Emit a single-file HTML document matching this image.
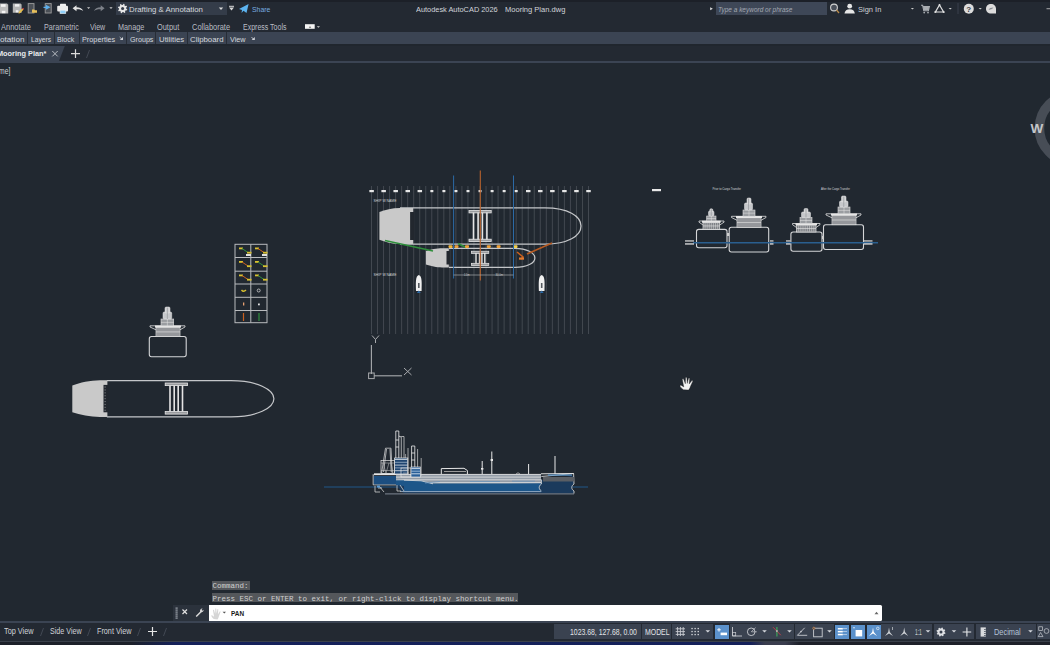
<!DOCTYPE html>
<html><head><meta charset="utf-8">
<style>
*{margin:0;padding:0;box-sizing:border-box}
html,body{width:1050px;height:645px;overflow:hidden;background:#212830;font-family:"Liberation Sans",sans-serif}
.a{position:absolute;white-space:pre;transform-origin:0 0;line-height:normal}
.sep{top:32px;width:1px;height:12px;background:#272d36}
.sb{height:15.4px;background:#3a4250}
.bl{height:14.2px;background:#5b91cb}
</style></head><body>
<div class="a" style="left:0;top:0;width:1050px;height:32px;background:#232932"></div>
<div class="a" style="left:0;top:0;width:1050px;height:1.5px;background:#1c2028"></div>
<div class="a" style="left:0;top:32px;width:1050px;height:12px;background:#3b4453"></div>
<div class="a" style="left:0;top:44px;width:1050px;height:2px;background:#20262e"></div>
<div class="a" style="left:0;top:46px;width:1050px;height:15px;background:#232932"></div>
<div class="a" style="left:0;top:61px;width:1050px;height:2px;background:#3b4453"></div>
<div class="a" style="left:0;top:621px;width:1050px;height:2px;background:#3b4453"></div>
<div class="a" style="left:0;top:623px;width:1050px;height:18px;background:#232932"></div>
<div class="a" style="left:0;top:641px;width:1050px;height:1px;background:#3a404a"></div>
<div class="a" style="left:0;top:642px;width:1050px;height:3px;background:linear-gradient(90deg,#1c2029 0px,#1c2029 130px,#15215a 175px,#14205a 750px,#3a3d4e 765px,#3a3d4e 785px,#1d2029 800px,#1d2029 1050px)"></div>
<!-- title bar boxes -->
<div class="a" style="left:116px;top:2px;width:110.5px;height:13px;background:#343c49"></div>
<div class="a" style="left:716px;top:2.4px;width:111px;height:12.8px;background:#3e4757"></div>
<!-- panel separators -->
<div class="a sep" style="left:27.4px"></div><div class="a sep" style="left:54.3px"></div><div class="a sep" style="left:78.9px"></div><div class="a sep" style="left:126.3px"></div><div class="a sep" style="left:154.9px"></div><div class="a sep" style="left:187.4px"></div><div class="a sep" style="left:226.4px"></div>
<svg class="a" style="left:0;top:46px" width="70" height="15"><polygon points="0,0 64.8,0 59,15 0,15" fill="#3b4453"/></svg>
<!-- command line -->
<div class="a" style="left:212px;top:580.5px;width:37.7px;height:9.4px;background:#54575b"></div>
<div class="a" style="left:212px;top:593px;width:306px;height:9.4px;background:#54575b"></div>
<div class="a" style="left:173px;top:604.5px;width:36px;height:16.2px;background:#2b323c"></div>
<div class="a" style="left:209px;top:605px;width:673px;height:15.8px;background:#ffffff;border-radius:0 1.5px 1.5px 0"></div>
<div class="a sb" style="left:554px;top:623.7px;width:86.6px"></div>
<div class="a sb" style="left:642px;top:623.7px;width:29.4px"></div>
<div class="a sb" style="left:672.3px;top:623.7px;width:40.7px"></div>
<div class="a sb" style="left:729.6px;top:623.7px;width:64.4px"></div>
<div class="a sb" style="left:795px;top:623.7px;width:39.0px"></div>
<div class="a sb" style="left:881.3px;top:623.7px;width:51.0px"></div>
<div class="a sb" style="left:933.9px;top:623.7px;width:25.7px"></div>
<div class="a sb" style="left:960.2px;top:623.7px;width:13.6px"></div>
<div class="a sb" style="left:975.7px;top:623.7px;width:60.0px"></div>
<div class="a sb" style="left:1037.3px;top:623.7px;width:14.7px"></div>
<div class="a bl" style="left:714.8px;top:624.6px;width:14.1px"></div>
<div class="a bl" style="left:835.2px;top:624.6px;width:14.2px"></div>
<div class="a bl" style="left:851px;top:624.6px;width:14.0px"></div>
<div class="a bl" style="left:867.2px;top:624.6px;width:14.1px"></div>
<div class="a" style="left:128.90px;top:5.12px;font-size:7.7px;color:#d6d9de;font-weight:normal;font-style:normal;transform:scaleX(1.018)">Drafting &amp; Annotation</div>
<div class="a" style="left:252.00px;top:5.12px;font-size:7.8px;color:#78aee0;font-weight:normal;font-style:normal;transform:scaleX(0.879)">Share</div>
<div class="a" style="left:415.60px;top:5.12px;font-size:7.8px;color:#d2d5da;font-weight:normal;font-style:normal;transform:scaleX(0.947)">Autodesk AutoCAD 2026</div>
<div class="a" style="left:505.00px;top:5.12px;font-size:7.8px;color:#d2d5da;font-weight:normal;font-style:normal;transform:scaleX(0.967)">Mooring Plan.dwg</div>
<div class="a" style="left:718.00px;top:5.12px;font-size:7.8px;color:#a3a9b2;font-weight:normal;font-style:italic;transform:scaleX(0.831)">Type a keyword or phrase</div>
<div class="a" style="left:858.00px;top:5.32px;font-size:7.8px;color:#cdd1d6;font-weight:normal;font-style:normal;transform:scaleX(0.961)">Sign In</div>
<div class="a" style="left:0.90px;top:21.77px;font-size:8.4px;color:#b9bdc4;font-weight:normal;font-style:normal;transform:scaleX(0.892)">Annotate</div>
<div class="a" style="left:44.00px;top:21.77px;font-size:8.4px;color:#b9bdc4;font-weight:normal;font-style:normal;transform:scaleX(0.859)">Parametric</div>
<div class="a" style="left:90.30px;top:21.77px;font-size:8.4px;color:#b9bdc4;font-weight:normal;font-style:normal;transform:scaleX(0.844)">View</div>
<div class="a" style="left:118.30px;top:21.77px;font-size:8.4px;color:#b9bdc4;font-weight:normal;font-style:normal;transform:scaleX(0.869)">Manage</div>
<div class="a" style="left:156.90px;top:21.77px;font-size:8.4px;color:#b9bdc4;font-weight:normal;font-style:normal;transform:scaleX(0.883)">Output</div>
<div class="a" style="left:191.90px;top:21.77px;font-size:8.4px;color:#b9bdc4;font-weight:normal;font-style:normal;transform:scaleX(0.889)">Collaborate</div>
<div class="a" style="left:242.60px;top:21.77px;font-size:8.4px;color:#b9bdc4;font-weight:normal;font-style:normal;transform:scaleX(0.836)">Express Tools</div>
<div class="a" style="left:0.00px;top:34.95px;font-size:8.1px;color:#d5d8dd;font-weight:normal;font-style:normal;transform:scaleX(1.008)">otation</div>
<div class="a" style="left:31.00px;top:34.95px;font-size:8.1px;color:#d5d8dd;font-weight:normal;font-style:normal;transform:scaleX(0.825)">Layers</div>
<div class="a" style="left:57.10px;top:34.95px;font-size:8.1px;color:#d5d8dd;font-weight:normal;font-style:normal;transform:scaleX(0.873)">Block</div>
<div class="a" style="left:81.70px;top:34.95px;font-size:8.1px;color:#d5d8dd;font-weight:normal;font-style:normal;transform:scaleX(0.901)">Properties</div>
<div class="a" style="left:129.70px;top:34.95px;font-size:8.1px;color:#d5d8dd;font-weight:normal;font-style:normal;transform:scaleX(0.883)">Groups</div>
<div class="a" style="left:158.90px;top:34.95px;font-size:8.1px;color:#d5d8dd;font-weight:normal;font-style:normal;transform:scaleX(0.964)">Utilities</div>
<div class="a" style="left:190.00px;top:34.95px;font-size:8.1px;color:#d5d8dd;font-weight:normal;font-style:normal;transform:scaleX(0.969)">Clipboard</div>
<div class="a" style="left:230.00px;top:34.95px;font-size:8.1px;color:#d5d8dd;font-weight:normal;font-style:normal;transform:scaleX(0.895)">View</div>
<div class="a" style="left:-3.20px;top:49.04px;font-size:8px;color:#e8eaed;font-weight:bold;font-style:normal;transform:scaleX(0.918)">Mooring Plan*</div>
<div class="a" style="left:-1.00px;top:65.98px;font-size:8.5px;color:#d0d3d8;font-weight:normal;font-style:normal;transform:scaleX(0.797)">me]</div>
<div class="a" style="left:4.00px;top:626.27px;font-size:8.4px;color:#d0d3d8;font-weight:normal;font-style:normal;transform:scaleX(0.874)">Top View</div>
<div class="a" style="left:49.60px;top:626.27px;font-size:8.4px;color:#d0d3d8;font-weight:normal;font-style:normal;transform:scaleX(0.852)">Side View</div>
<div class="a" style="left:96.70px;top:626.27px;font-size:8.4px;color:#d0d3d8;font-weight:normal;font-style:normal;transform:scaleX(0.865)">Front View</div>
<div class="a" style="left:570.30px;top:627.46px;font-size:8.3px;color:#e2e4e7;font-weight:normal;font-style:normal;transform:scaleX(0.828)">1023.68, 127.68, 0.00</div>
<div class="a" style="left:644.60px;top:627.46px;font-size:8.3px;color:#e2e4e7;font-weight:normal;font-style:normal;transform:scaleX(0.833)">MODEL</div>
<div class="a" style="left:994.00px;top:627.46px;font-size:8.3px;color:#b4c2d6;font-weight:normal;font-style:normal;transform:scaleX(0.893)">Decimal</div>
<div class="a" style="left:915.00px;top:627.46px;font-size:8.3px;color:#c8ccd2;font-weight:normal;font-style:normal;transform:scaleX(0.587)">1:1</div>
<div class="a" style="left:231.30px;top:609.86px;font-size:7px;color:#1a1a1a;font-weight:bold;font-style:normal;transform:scaleX(0.915)">PAN</div>
<div class="a" style="left:212.5px;top:581.6px;font-family:'Liberation Mono',monospace;font-size:7.5px;color:#d0d0d0">Command:</div>
<div class="a" style="left:212.5px;top:594.6px;font-family:'Liberation Mono',monospace;font-size:7.5px;color:#d0d0d0">Press ESC or ENTER to exit, or right-click to display shortcut menu.</div>
<svg class="a" style="left:0;top:0" width="1050" height="645" viewBox="0 0 1050 645">
<line x1="371.5" y1="186" x2="371.5" y2="334" stroke="#464c54" stroke-width="0.9"/>
<line x1="377.53" y1="186" x2="377.53" y2="334" stroke="#464c54" stroke-width="0.9"/>
<line x1="383.56" y1="186" x2="383.56" y2="334" stroke="#464c54" stroke-width="0.9"/>
<line x1="389.58" y1="186" x2="389.58" y2="334" stroke="#464c54" stroke-width="0.9"/>
<line x1="395.61" y1="186" x2="395.61" y2="334" stroke="#464c54" stroke-width="0.9"/>
<line x1="401.64" y1="186" x2="401.64" y2="334" stroke="#464c54" stroke-width="0.9"/>
<line x1="407.67" y1="186" x2="407.67" y2="334" stroke="#464c54" stroke-width="0.9"/>
<line x1="413.7" y1="186" x2="413.7" y2="334" stroke="#464c54" stroke-width="0.9"/>
<line x1="419.72" y1="186" x2="419.72" y2="334" stroke="#464c54" stroke-width="0.9"/>
<line x1="425.75" y1="186" x2="425.75" y2="334" stroke="#464c54" stroke-width="0.9"/>
<line x1="431.78" y1="186" x2="431.78" y2="334" stroke="#464c54" stroke-width="0.9"/>
<line x1="437.81" y1="186" x2="437.81" y2="334" stroke="#464c54" stroke-width="0.9"/>
<line x1="443.84" y1="186" x2="443.84" y2="334" stroke="#464c54" stroke-width="0.9"/>
<line x1="449.86" y1="186" x2="449.86" y2="334" stroke="#464c54" stroke-width="0.9"/>
<line x1="455.89" y1="186" x2="455.89" y2="334" stroke="#464c54" stroke-width="0.9"/>
<line x1="461.92" y1="186" x2="461.92" y2="334" stroke="#464c54" stroke-width="0.9"/>
<line x1="467.95" y1="186" x2="467.95" y2="334" stroke="#464c54" stroke-width="0.9"/>
<line x1="473.98" y1="186" x2="473.98" y2="334" stroke="#464c54" stroke-width="0.9"/>
<line x1="480" y1="186" x2="480" y2="334" stroke="#464c54" stroke-width="0.9"/>
<line x1="486.03" y1="186" x2="486.03" y2="334" stroke="#464c54" stroke-width="0.9"/>
<line x1="492.06" y1="186" x2="492.06" y2="334" stroke="#464c54" stroke-width="0.9"/>
<line x1="498.09" y1="186" x2="498.09" y2="334" stroke="#464c54" stroke-width="0.9"/>
<line x1="504.12" y1="186" x2="504.12" y2="334" stroke="#464c54" stroke-width="0.9"/>
<line x1="510.14" y1="186" x2="510.14" y2="334" stroke="#464c54" stroke-width="0.9"/>
<line x1="516.17" y1="186" x2="516.17" y2="334" stroke="#464c54" stroke-width="0.9"/>
<line x1="522.2" y1="186" x2="522.2" y2="334" stroke="#464c54" stroke-width="0.9"/>
<line x1="528.23" y1="186" x2="528.23" y2="334" stroke="#464c54" stroke-width="0.9"/>
<line x1="534.26" y1="186" x2="534.26" y2="334" stroke="#464c54" stroke-width="0.9"/>
<line x1="540.28" y1="186" x2="540.28" y2="334" stroke="#464c54" stroke-width="0.9"/>
<line x1="546.31" y1="186" x2="546.31" y2="334" stroke="#464c54" stroke-width="0.9"/>
<line x1="552.34" y1="186" x2="552.34" y2="334" stroke="#464c54" stroke-width="0.9"/>
<line x1="558.37" y1="186" x2="558.37" y2="334" stroke="#464c54" stroke-width="0.9"/>
<line x1="564.4" y1="186" x2="564.4" y2="334" stroke="#464c54" stroke-width="0.9"/>
<line x1="570.42" y1="186" x2="570.42" y2="334" stroke="#464c54" stroke-width="0.9"/>
<line x1="576.45" y1="186" x2="576.45" y2="334" stroke="#464c54" stroke-width="0.9"/>
<line x1="582.48" y1="186" x2="582.48" y2="334" stroke="#464c54" stroke-width="0.9"/>
<line x1="588.51" y1="186" x2="588.51" y2="334" stroke="#464c54" stroke-width="0.9"/>
<rect x="369.35" y="190" width="4.5" height="2.2" fill="#e6e6e6"/>
<rect x="381.4" y="190" width="4.5" height="2.2" fill="#e6e6e6"/>
<rect x="393.45" y="190" width="4.5" height="2.2" fill="#e6e6e6"/>
<rect x="405.5" y="190" width="4.5" height="2.2" fill="#e6e6e6"/>
<rect x="417.55" y="190" width="4.5" height="2.2" fill="#e6e6e6"/>
<rect x="430.35" y="190" width="3" height="2.2" fill="#e6e6e6"/>
<rect x="442.4" y="190" width="3" height="2.2" fill="#e6e6e6"/>
<rect x="454.45" y="190" width="3" height="2.2" fill="#e6e6e6"/>
<rect x="466.5" y="190" width="3" height="2.2" fill="#e6e6e6"/>
<rect x="478.55" y="190" width="3" height="2.2" fill="#e6e6e6"/>
<rect x="490.6" y="190" width="3" height="2.2" fill="#e6e6e6"/>
<rect x="502.65" y="190" width="3" height="2.2" fill="#e6e6e6"/>
<rect x="514.7" y="190" width="3" height="2.2" fill="#e6e6e6"/>
<rect x="526" y="190" width="4.5" height="2.2" fill="#e6e6e6"/>
<rect x="538.05" y="190" width="4.5" height="2.2" fill="#e6e6e6"/>
<rect x="550.1" y="190" width="4.5" height="2.2" fill="#e6e6e6"/>
<rect x="562.15" y="190" width="4.5" height="2.2" fill="#e6e6e6"/>
<rect x="574.2" y="190" width="4.5" height="2.2" fill="#e6e6e6"/>
<rect x="586.25" y="190" width="4.5" height="2.2" fill="#e6e6e6"/>
<text x="373.5" y="202.3" font-family="Liberation Sans" font-size="3.6" fill="#d0d2d5" textLength="23" lengthAdjust="spacingAndGlyphs">SHIP W NAME</text>
<text x="373.5" y="276.3" font-family="Liberation Sans" font-size="3.6" fill="#d0d2d5" textLength="23" lengthAdjust="spacingAndGlyphs">SHIP W NAME</text>
<path d="M400,207.9 L545,207.9 C568,208 581,216 581,226 C581,236 568,244 545,244.1 L400,244.1" fill="none" stroke="#c4c6c9" stroke-width="1.3"/>
<path d="M379.4,212 C385,209.5 392,208 400,207.9 L413.1,207.9 L413.1,244.1 L400,244.1 C392,244 385,242 379.4,239.8 Z" fill="#c9c9c9"/>
<rect x="410.1" y="212" width="4.2" height="28" fill="#22272e"/>
<rect x="469" y="210.5" width="22.2" height="2.4" fill="#9a9c9f" stroke="#e8e8e8" stroke-width="0.8"/>
<rect x="469" y="239.2" width="22.2" height="2.4" fill="#9a9c9f" stroke="#e8e8e8" stroke-width="0.8"/>
<rect x="472.7" y="212.5" width="1.6" height="27" fill="#e4e4e4"/>
<rect x="477.3" y="212.5" width="1.6" height="27" fill="#e4e4e4"/>
<rect x="481.6" y="212.5" width="1.6" height="27" fill="#e4e4e4"/>
<rect x="486.1" y="212.5" width="1.6" height="27" fill="#e4e4e4"/>
<path d="M449,248.3 L515,248.3 C527,248.3 534.9,253 534.9,257.9 C534.9,263 527,267.4 515,267.4 L449,267.4" fill="none" stroke="#c4c6c9" stroke-width="1.2"/>
<path d="M425.9,251 C430,249.5 437,248.3 442,248.3 L448.8,248.3 L448.8,267.4 L442,267.4 C437,267.4 430,266 425.9,264.5 Z" fill="#c9c9c9"/>
<rect x="446.5" y="251" width="3.4" height="13.5" fill="#22272e"/>
<rect x="471.4" y="251.2" width="17.4" height="2.3" fill="#9a9c9f" stroke="#e8e8e8" stroke-width="0.7"/>
<rect x="471.4" y="263.3" width="17.4" height="2.3" fill="#9a9c9f" stroke="#e8e8e8" stroke-width="0.7"/>
<rect x="475.3" y="253" width="1.4" height="10.5" fill="#e4e4e4"/>
<rect x="478.8" y="253" width="1.4" height="10.5" fill="#e4e4e4"/>
<rect x="481.2" y="253" width="1.4" height="10.5" fill="#e4e4e4"/>
<rect x="484.1" y="253" width="1.4" height="10.5" fill="#e4e4e4"/>
<line x1="385" y1="240.5" x2="433" y2="251" stroke="#2f8f3c" stroke-width="1.6"/>
<line x1="458" y1="243.5" x2="466" y2="247.5" stroke="#2f8f3c" stroke-width="1.8"/>
<line x1="552" y1="243" x2="527" y2="254" stroke="#b85b22" stroke-width="1.4"/>
<path d="M517,252 L523,257 L521,259" fill="none" stroke="#c8601e" stroke-width="1.6"/>
<rect x="519" y="257.5" width="5" height="2.2" fill="#e07a30"/>
<rect x="448.5" y="245.3" width="4" height="2.6" rx="0.8" fill="#f0b43a"/>
<rect x="454.5" y="245.3" width="4" height="2.6" rx="0.8" fill="#f0a23a"/>
<rect x="465" y="245.3" width="4" height="2.6" rx="0.8" fill="#f0a23a"/>
<rect x="486.8" y="245.3" width="4" height="2.6" rx="0.8" fill="#f0a23a"/>
<rect x="496.6" y="245.3" width="4" height="2.6" rx="0.8" fill="#f0a23a"/>
<rect x="513.5" y="245.3" width="4" height="2.6" rx="0.8" fill="#f4d04a"/>
<line x1="453.6" y1="175.5" x2="453.6" y2="278.5" stroke="#2c6aa6" stroke-width="1"/>
<line x1="513.5" y1="175.5" x2="513.5" y2="278.5" stroke="#2c6aa6" stroke-width="1"/>
<line x1="480.3" y1="170.5" x2="480.3" y2="280.5" stroke="#b8622e" stroke-width="1.1"/>
<line x1="453.6" y1="275" x2="513.5" y2="275" stroke="#a8aaad" stroke-width="0.7"/>
<text x="464" y="276.2" font-family="Liberation Sans" font-size="3.2" fill="#c8cacd" textLength="5.5" lengthAdjust="spacingAndGlyphs">1.5m</text>
<text x="495.5" y="276.2" font-family="Liberation Sans" font-size="3.2" fill="#c8cacd" textLength="7.5" lengthAdjust="spacingAndGlyphs">30.0m</text>
<path d="M418.8,275 C422.3,276 421.8,283 421.6,291 L416,291 C415.8,283 415.3,276 418.8,275 Z" fill="#f0f0f0"/>
<rect x="418" y="283" width="1.6" height="5" fill="#555a60"/>
<path d="M416.8,293 L418.8,290.5 L420.8,293 Z" fill="#2c6aa6"/>
<path d="M541.7,275 C545.2,276 544.7,283 544.5,291 L538.9,291 C538.7,283 538.2,276 541.7,275 Z" fill="#f0f0f0"/>
<rect x="540.9" y="283" width="1.6" height="5" fill="#555a60"/>
<path d="M539.7,293 L541.7,290.5 L543.7,293 Z" fill="#2c6aa6"/>
</svg>
<svg class="a" style="left:0;top:0" width="1050" height="645" viewBox="0 0 1050 645">
<rect x="696.5" y="229.4" width="30.5" height="18.4" rx="2.2" fill="none" stroke="#d4d5d7" stroke-width="1.1"/>
<rect x="703" y="222.5" width="16.7" height="6.9" fill="#7d8085" stroke="#e4e4e4" stroke-width="0.7"/>
<line x1="705.09" y1="223" x2="705.09" y2="228.9" stroke="#e8e8e8" stroke-width="0.45"/>
<line x1="707.17" y1="223" x2="707.17" y2="228.9" stroke="#e8e8e8" stroke-width="0.45"/>
<line x1="709.26" y1="223" x2="709.26" y2="228.9" stroke="#e8e8e8" stroke-width="0.45"/>
<line x1="711.35" y1="223" x2="711.35" y2="228.9" stroke="#e8e8e8" stroke-width="0.45"/>
<line x1="713.44" y1="223" x2="713.44" y2="228.9" stroke="#e8e8e8" stroke-width="0.45"/>
<line x1="715.53" y1="223" x2="715.53" y2="228.9" stroke="#e8e8e8" stroke-width="0.45"/>
<line x1="717.61" y1="223" x2="717.61" y2="228.9" stroke="#e8e8e8" stroke-width="0.45"/>
<line x1="703" y1="225.95" x2="719.7" y2="225.95" stroke="#e6e6e6" stroke-width="0.6"/>
<path d="M699,221 L724,221 L724,222.2 L719.7,225 M699,221 L699,222.2 L703,225" fill="none" stroke="#e2e2e2" stroke-width="0.8"/>
<rect x="702" y="220.7" width="18.7" height="2" fill="#e6e6e6"/>
<rect x="706.7" y="216" width="9.3" height="5" fill="#9a9da1" stroke="#e0e0e0" stroke-width="0.6"/>
<line x1="711.35" y1="216" x2="711.35" y2="221" stroke="#e6e6e6" stroke-width="0.5"/>
<line x1="706.7" y1="218.5" x2="716" y2="218.5" stroke="#e6e6e6" stroke-width="0.5"/>
<rect x="708.5" y="211" width="5.5" height="5" rx="1.2" fill="#c6c8cb" stroke="#e8e8e8" stroke-width="0.5"/>
<rect x="709.8" y="208.8" width="3" height="3.2" rx="1.2" fill="#cfd0d2" stroke="#e8e8e8" stroke-width="0.5"/>
<line x1="711.25" y1="209.3" x2="711.25" y2="216" stroke="#8a8d92" stroke-width="0.6"/>
<rect x="729.2" y="227.3" width="39.5" height="24.7" rx="2.2" fill="none" stroke="#d4d5d7" stroke-width="1.1"/>
<rect x="737" y="217.8" width="24" height="9.5" fill="#7d8085" stroke="#e4e4e4" stroke-width="0.7"/>
<line x1="739" y1="218.3" x2="739" y2="226.8" stroke="#e8e8e8" stroke-width="0.45"/>
<line x1="741" y1="218.3" x2="741" y2="226.8" stroke="#e8e8e8" stroke-width="0.45"/>
<line x1="743" y1="218.3" x2="743" y2="226.8" stroke="#e8e8e8" stroke-width="0.45"/>
<line x1="745" y1="218.3" x2="745" y2="226.8" stroke="#e8e8e8" stroke-width="0.45"/>
<line x1="747" y1="218.3" x2="747" y2="226.8" stroke="#e8e8e8" stroke-width="0.45"/>
<line x1="749" y1="218.3" x2="749" y2="226.8" stroke="#e8e8e8" stroke-width="0.45"/>
<line x1="751" y1="218.3" x2="751" y2="226.8" stroke="#e8e8e8" stroke-width="0.45"/>
<line x1="753" y1="218.3" x2="753" y2="226.8" stroke="#e8e8e8" stroke-width="0.45"/>
<line x1="755" y1="218.3" x2="755" y2="226.8" stroke="#e8e8e8" stroke-width="0.45"/>
<line x1="757" y1="218.3" x2="757" y2="226.8" stroke="#e8e8e8" stroke-width="0.45"/>
<line x1="759" y1="218.3" x2="759" y2="226.8" stroke="#e8e8e8" stroke-width="0.45"/>
<line x1="737" y1="222.55" x2="761" y2="222.55" stroke="#e6e6e6" stroke-width="0.6"/>
<path d="M731.5,216.3 L766,216.3 L766,217.5 L761,220.3 M731.5,216.3 L731.5,217.5 L737,220.3" fill="none" stroke="#e2e2e2" stroke-width="0.8"/>
<rect x="736" y="216" width="26" height="2" fill="#e6e6e6"/>
<rect x="743" y="210" width="12" height="6.3" fill="#9a9da1" stroke="#e0e0e0" stroke-width="0.6"/>
<line x1="749" y1="210" x2="749" y2="216.3" stroke="#e6e6e6" stroke-width="0.5"/>
<line x1="743" y1="213.15" x2="755" y2="213.15" stroke="#e6e6e6" stroke-width="0.5"/>
<rect x="744.5" y="203" width="8" height="7" rx="1.2" fill="#c6c8cb" stroke="#e8e8e8" stroke-width="0.5"/>
<rect x="747" y="198" width="4" height="6" rx="1.2" fill="#cfd0d2" stroke="#e8e8e8" stroke-width="0.5"/>
<line x1="748.5" y1="198.5" x2="748.5" y2="210" stroke="#8a8d92" stroke-width="0.6"/>
<rect x="790.9" y="232" width="31.1" height="19.3" rx="2.2" fill="none" stroke="#d4d5d7" stroke-width="1.1"/>
<rect x="796.5" y="225" width="19.5" height="7" fill="#7d8085" stroke="#e4e4e4" stroke-width="0.7"/>
<line x1="798.67" y1="225.5" x2="798.67" y2="231.5" stroke="#e8e8e8" stroke-width="0.45"/>
<line x1="800.83" y1="225.5" x2="800.83" y2="231.5" stroke="#e8e8e8" stroke-width="0.45"/>
<line x1="803" y1="225.5" x2="803" y2="231.5" stroke="#e8e8e8" stroke-width="0.45"/>
<line x1="805.17" y1="225.5" x2="805.17" y2="231.5" stroke="#e8e8e8" stroke-width="0.45"/>
<line x1="807.33" y1="225.5" x2="807.33" y2="231.5" stroke="#e8e8e8" stroke-width="0.45"/>
<line x1="809.5" y1="225.5" x2="809.5" y2="231.5" stroke="#e8e8e8" stroke-width="0.45"/>
<line x1="811.67" y1="225.5" x2="811.67" y2="231.5" stroke="#e8e8e8" stroke-width="0.45"/>
<line x1="813.83" y1="225.5" x2="813.83" y2="231.5" stroke="#e8e8e8" stroke-width="0.45"/>
<line x1="796.5" y1="228.5" x2="816" y2="228.5" stroke="#e6e6e6" stroke-width="0.6"/>
<path d="M792.5,223.5 L820,223.5 L820,224.7 L816,227.5 M792.5,223.5 L792.5,224.7 L796.5,227.5" fill="none" stroke="#e2e2e2" stroke-width="0.8"/>
<rect x="795.5" y="223.2" width="21.5" height="2" fill="#e6e6e6"/>
<rect x="800" y="217.5" width="12" height="6" fill="#9a9da1" stroke="#e0e0e0" stroke-width="0.6"/>
<line x1="806" y1="217.5" x2="806" y2="223.5" stroke="#e6e6e6" stroke-width="0.5"/>
<line x1="800" y1="220.5" x2="812" y2="220.5" stroke="#e6e6e6" stroke-width="0.5"/>
<rect x="801.5" y="212" width="9" height="5.5" rx="1.2" fill="#c6c8cb" stroke="#e8e8e8" stroke-width="0.5"/>
<rect x="804" y="208.5" width="4" height="4.5" rx="1.2" fill="#cfd0d2" stroke="#e8e8e8" stroke-width="0.5"/>
<line x1="806" y1="209" x2="806" y2="217.5" stroke="#8a8d92" stroke-width="0.6"/>
<rect x="823.5" y="224.7" width="40" height="24.8" rx="2.2" fill="none" stroke="#d4d5d7" stroke-width="1.1"/>
<rect x="832" y="215.3" width="24" height="9.4" fill="#7d8085" stroke="#e4e4e4" stroke-width="0.7"/>
<line x1="834" y1="215.8" x2="834" y2="224.2" stroke="#e8e8e8" stroke-width="0.45"/>
<line x1="836" y1="215.8" x2="836" y2="224.2" stroke="#e8e8e8" stroke-width="0.45"/>
<line x1="838" y1="215.8" x2="838" y2="224.2" stroke="#e8e8e8" stroke-width="0.45"/>
<line x1="840" y1="215.8" x2="840" y2="224.2" stroke="#e8e8e8" stroke-width="0.45"/>
<line x1="842" y1="215.8" x2="842" y2="224.2" stroke="#e8e8e8" stroke-width="0.45"/>
<line x1="844" y1="215.8" x2="844" y2="224.2" stroke="#e8e8e8" stroke-width="0.45"/>
<line x1="846" y1="215.8" x2="846" y2="224.2" stroke="#e8e8e8" stroke-width="0.45"/>
<line x1="848" y1="215.8" x2="848" y2="224.2" stroke="#e8e8e8" stroke-width="0.45"/>
<line x1="850" y1="215.8" x2="850" y2="224.2" stroke="#e8e8e8" stroke-width="0.45"/>
<line x1="852" y1="215.8" x2="852" y2="224.2" stroke="#e8e8e8" stroke-width="0.45"/>
<line x1="854" y1="215.8" x2="854" y2="224.2" stroke="#e8e8e8" stroke-width="0.45"/>
<line x1="832" y1="220" x2="856" y2="220" stroke="#e6e6e6" stroke-width="0.6"/>
<path d="M826,213.8 L861,213.8 L861,215 L856,217.8 M826,213.8 L826,215 L832,217.8" fill="none" stroke="#e2e2e2" stroke-width="0.8"/>
<rect x="831" y="213.5" width="26" height="2" fill="#e6e6e6"/>
<rect x="838" y="207" width="12" height="6.8" fill="#9a9da1" stroke="#e0e0e0" stroke-width="0.6"/>
<line x1="844" y1="207" x2="844" y2="213.8" stroke="#e6e6e6" stroke-width="0.5"/>
<line x1="838" y1="210.4" x2="850" y2="210.4" stroke="#e6e6e6" stroke-width="0.5"/>
<rect x="839.5" y="201" width="8.5" height="6" rx="1.2" fill="#c6c8cb" stroke="#e8e8e8" stroke-width="0.5"/>
<rect x="841.5" y="196" width="4.5" height="6" rx="1.2" fill="#cfd0d2" stroke="#e8e8e8" stroke-width="0.5"/>
<line x1="843.75" y1="196.5" x2="843.75" y2="207" stroke="#8a8d92" stroke-width="0.6"/>
<line x1="693" y1="242.7" x2="878" y2="242.7" stroke="#2a5f8f" stroke-width="1.5"/>
<rect x="685" y="240.3" width="9" height="1.3" fill="#d0d0d0"/>
<rect x="685" y="243.3" width="9" height="1.3" fill="#e0e0e0"/>
<rect x="770" y="240.3" width="3.5" height="1.3" fill="#d0d0d0"/>
<rect x="770" y="243.3" width="3.5" height="1.3" fill="#e0e0e0"/>
<rect x="786" y="240.3" width="4.5" height="1.3" fill="#d0d0d0"/>
<rect x="786" y="243.3" width="4.5" height="1.3" fill="#e0e0e0"/>
<rect x="864" y="240.3" width="8.5" height="1.3" fill="#d0d0d0"/>
<rect x="864" y="243.3" width="8.5" height="1.3" fill="#e0e0e0"/>
<rect x="727" y="233" width="2.2" height="3" fill="#cfcfcf"/>
<rect x="822" y="236" width="2" height="3" fill="#cfcfcf"/>
<text x="712.5" y="190" font-family="Liberation Sans" font-size="3.4" fill="#d6d8db" textLength="28.5" lengthAdjust="spacingAndGlyphs">Prior to Cargo Transfer</text>
<text x="821" y="190" font-family="Liberation Sans" font-size="3.4" fill="#d6d8db" textLength="29" lengthAdjust="spacingAndGlyphs">After the Cargo Transfer</text>
<rect x="652" y="189" width="9" height="2.2" fill="#e8e8e8"/>
<rect x="235" y="244.3" width="32" height="78.4" fill="none" stroke="#b9bbbe" stroke-width="1"/>
<line x1="250.8" y1="244.3" x2="250.8" y2="322.7" stroke="#b9bbbe" stroke-width="1"/>
<line x1="235" y1="257.5" x2="267" y2="257.5" stroke="#b9bbbe" stroke-width="1"/>
<line x1="235" y1="271.2" x2="267" y2="271.2" stroke="#b9bbbe" stroke-width="1"/>
<line x1="235" y1="284" x2="267" y2="284" stroke="#b9bbbe" stroke-width="1"/>
<line x1="235" y1="297.3" x2="267" y2="297.3" stroke="#b9bbbe" stroke-width="1"/>
<line x1="235" y1="310.5" x2="267" y2="310.5" stroke="#b9bbbe" stroke-width="1"/>
<rect x="239" y="247.5" width="4" height="1.8" fill="#d8c030"/>
<line x1="242" y1="248.5" x2="248" y2="252.5" stroke="#2f8f3c" stroke-width="1"/>
<rect x="247" y="251.8" width="4.5" height="1.8" fill="#d8c030"/>
<rect x="255" y="247.5" width="4" height="1.8" fill="#d8c030"/>
<line x1="258" y1="248.5" x2="264" y2="252.5" stroke="#c8601e" stroke-width="1"/>
<rect x="263" y="251.8" width="4.5" height="1.8" fill="#d8c030"/>
<rect x="246" y="254" width="5" height="2" fill="#e0e0e0"/><rect x="262" y="254" width="5" height="2" fill="#e0e0e0"/>
<rect x="239" y="261" width="4" height="1.8" fill="#d8c030"/>
<line x1="242" y1="262" x2="248" y2="266" stroke="#c8601e" stroke-width="1"/>
<rect x="247" y="265.3" width="4.5" height="1.8" fill="#d8c030"/>
<rect x="255" y="261" width="4" height="1.8" fill="#d8c030"/>
<line x1="258" y1="262" x2="264" y2="266" stroke="#2f8f3c" stroke-width="1"/>
<rect x="263" y="265.3" width="4.5" height="1.8" fill="#d8c030"/>
<rect x="239" y="274.5" width="4" height="1.8" fill="#d8c030"/>
<line x1="242" y1="275.5" x2="248" y2="279.5" stroke="#c8601e" stroke-width="1"/>
<rect x="247" y="278.8" width="4.5" height="1.8" fill="#d8c030"/>
<rect x="255" y="274.5" width="4" height="1.8" fill="#d8c030"/>
<line x1="258" y1="275.5" x2="264" y2="279.5" stroke="#2f8f3c" stroke-width="1"/>
<rect x="263" y="278.8" width="4.5" height="1.8" fill="#d8c030"/>
<path d="M241.5,290 Q243.5,292.5 246,290" fill="none" stroke="#d8c030" stroke-width="1.4"/>
<circle cx="258.7" cy="290.5" r="1.5" fill="none" stroke="#cfcfcf" stroke-width="0.8"/>
<rect x="243" y="302.5" width="1.3" height="3" fill="#e6a070"/>
<rect x="258" y="303.5" width="1.8" height="1.8" fill="#e0e0e0"/>
<line x1="243.5" y1="313" x2="243.5" y2="321" stroke="#c8601e" stroke-width="1.2"/>
<line x1="259" y1="313" x2="259" y2="321" stroke="#2f8f3c" stroke-width="1.2"/>
<rect x="149.3" y="336.5" width="36.9" height="20.2" rx="2.2" fill="none" stroke="#d4d5d7" stroke-width="1.1"/>
<rect x="156" y="327.3" width="24" height="9.2" fill="#7d8085" stroke="#e4e4e4" stroke-width="0.7"/>
<line x1="158" y1="327.8" x2="158" y2="336" stroke="#e8e8e8" stroke-width="0.45"/>
<line x1="160" y1="327.8" x2="160" y2="336" stroke="#e8e8e8" stroke-width="0.45"/>
<line x1="162" y1="327.8" x2="162" y2="336" stroke="#e8e8e8" stroke-width="0.45"/>
<line x1="164" y1="327.8" x2="164" y2="336" stroke="#e8e8e8" stroke-width="0.45"/>
<line x1="166" y1="327.8" x2="166" y2="336" stroke="#e8e8e8" stroke-width="0.45"/>
<line x1="168" y1="327.8" x2="168" y2="336" stroke="#e8e8e8" stroke-width="0.45"/>
<line x1="170" y1="327.8" x2="170" y2="336" stroke="#e8e8e8" stroke-width="0.45"/>
<line x1="172" y1="327.8" x2="172" y2="336" stroke="#e8e8e8" stroke-width="0.45"/>
<line x1="174" y1="327.8" x2="174" y2="336" stroke="#e8e8e8" stroke-width="0.45"/>
<line x1="176" y1="327.8" x2="176" y2="336" stroke="#e8e8e8" stroke-width="0.45"/>
<line x1="178" y1="327.8" x2="178" y2="336" stroke="#e8e8e8" stroke-width="0.45"/>
<line x1="156" y1="331.9" x2="180" y2="331.9" stroke="#e6e6e6" stroke-width="0.6"/>
<path d="M150,325.8 L185,325.8 L185,327 L180,329.8 M150,325.8 L150,327 L156,329.8" fill="none" stroke="#e2e2e2" stroke-width="0.8"/>
<rect x="155" y="325.5" width="26" height="2" fill="#e6e6e6"/>
<rect x="161" y="319" width="12.7" height="6.8" fill="#9a9da1" stroke="#e0e0e0" stroke-width="0.6"/>
<line x1="167.35" y1="319" x2="167.35" y2="325.8" stroke="#e6e6e6" stroke-width="0.5"/>
<line x1="161" y1="322.4" x2="173.7" y2="322.4" stroke="#e6e6e6" stroke-width="0.5"/>
<rect x="163" y="312" width="8.7" height="7" rx="1.2" fill="#c6c8cb" stroke="#e8e8e8" stroke-width="0.5"/>
<rect x="165" y="307" width="5" height="6" rx="1.2" fill="#cfd0d2" stroke="#e8e8e8" stroke-width="0.5"/>
<line x1="167.35" y1="307.5" x2="167.35" y2="319" stroke="#8a8d92" stroke-width="0.6"/>
<path d="M106.9,380.6 L231,380.6 C257,380.6 273.9,389.5 273.9,398.7 C273.9,408 257,416.8 231,416.8 L106.9,416.8" fill="none" stroke="#c4c6c9" stroke-width="1.2"/>
<path d="M72.3,385.5 C80,382.5 90,380.6 100,380.3 L107.4,380.3 L107.4,417.1 L100,417.1 C90,416.8 80,415 72.3,412.3 Z" fill="#c9c9c9"/>
<rect x="103.5" y="384.9" width="5" height="27.4" fill="#22272e"/>
<rect x="104.6" y="386.5" width="1" height="1.1" fill="#8a8c8f"/>
<rect x="104.6" y="389.4" width="1" height="1.1" fill="#8a8c8f"/>
<rect x="104.6" y="392.3" width="1" height="1.1" fill="#8a8c8f"/>
<rect x="104.6" y="395.2" width="1" height="1.1" fill="#8a8c8f"/>
<rect x="104.6" y="398.1" width="1" height="1.1" fill="#8a8c8f"/>
<rect x="104.6" y="401" width="1" height="1.1" fill="#8a8c8f"/>
<rect x="104.6" y="403.9" width="1" height="1.1" fill="#8a8c8f"/>
<rect x="104.6" y="406.8" width="1" height="1.1" fill="#8a8c8f"/>
<rect x="104.6" y="409.7" width="1" height="1.1" fill="#8a8c8f"/>
<rect x="165.2" y="383" width="22.4" height="2.6" fill="#9a9c9f" stroke="#e8e8e8" stroke-width="0.8"/>
<rect x="165.2" y="411.5" width="22.4" height="2.6" fill="#9a9c9f" stroke="#e8e8e8" stroke-width="0.8"/>
<rect x="169.2" y="385.5" width="1.6" height="26" fill="#e4e4e4"/>
<rect x="173.4" y="385.5" width="1.6" height="26" fill="#e4e4e4"/>
<rect x="177.4" y="385.5" width="1.6" height="26" fill="#e4e4e4"/>
<rect x="181.7" y="385.5" width="1.6" height="26" fill="#e4e4e4"/>
<line x1="371.4" y1="345" x2="371.4" y2="374" stroke="#a9abae" stroke-width="1.1"/>
<line x1="374" y1="375.8" x2="402" y2="375.8" stroke="#a9abae" stroke-width="1.1"/>
<rect x="368.6" y="373" width="5.6" height="5.6" fill="none" stroke="#a9abae" stroke-width="1"/>
<path d="M372,335.5 L375.5,339.5 L379,335.5 M375.5,339.5 L375.5,343" fill="none" stroke="#a9abae" stroke-width="1"/>
<path d="M404,368 L411.5,375 M411.5,368 L404,375" fill="none" stroke="#a9abae" stroke-width="1"/>
</svg>
<svg class="a" style="left:0;top:0" width="1050" height="645" viewBox="0 0 1050 645">
<line x1="324" y1="487" x2="588" y2="487" stroke="#20476b" stroke-width="1.6"/>
<path d="M396,480 L541,480 L574,476 L574,484 C571,486 571,489 574,491 L574,493.5 L404,493.5 L396,486 Z" fill="#1b3a5c"/>
<path d="M373.2,474.2 L373.2,484.8 L396,484.8" fill="none" stroke="#dcdcdc" stroke-width="0.9"/>
<rect x="373.8" y="476" width="22.2" height="8.4" fill="#1c4e80"/>
<path d="M396,479.5 L541.4,479.5 L541.4,484 C538.5,486 538.5,489 541.4,491 L541.4,491.8 L404,491.8 L404,486 L396,485 Z" fill="#1d5689"/>
<line x1="400" y1="491.6" x2="541" y2="491.6" stroke="#9fb4c8" stroke-width="0.9"/>
<line x1="385" y1="493.8" x2="574" y2="493.8" stroke="#6d7580" stroke-width="1.3"/>
<path d="M541.4,476.5 L573.6,473.5 L574,484 C571,486 571,489 574,491 L574,493.5" fill="none" stroke="#d0d0d0" stroke-width="0.9"/>
<rect x="543" y="477" width="31" height="4.5" fill="#5a5e64"/>
<path d="M541.4,479.5 L541.4,484 C538.5,486 538.5,489 541.4,491" fill="none" stroke="#d8d8d8" stroke-width="0.9"/>
<path d="M396,474 L541,474 L541,483.3 L433,483.6 L421,480.6 L404,480 L396,479.5 Z" fill="#939ca7"/>
<line x1="396" y1="474.4" x2="541" y2="474.4" stroke="#e2e2e2" stroke-width="0.8"/>
<line x1="396" y1="477.1" x2="541" y2="477.1" stroke="#e2e2e2" stroke-width="0.8"/>
<line x1="396" y1="479.8" x2="541" y2="479.8" stroke="#e2e2e2" stroke-width="0.8"/>
<line x1="430" y1="482.6" x2="541" y2="482.6" stroke="#e2e2e2" stroke-width="0.8"/>
<path d="M404,480.2 L421,480.8 L433,483.8" fill="none" stroke="#e0e0e0" stroke-width="0.8"/>
<path d="M425,483 L440,481.5 M470,481.5 L500,481.5 M512,481.2 L535,481.2" stroke="#6f95bb" stroke-width="0.8"/>
<line x1="541" y1="473.8" x2="573.6" y2="473.5" stroke="#e0e0e0" stroke-width="1"/>
<rect x="548" y="474.4" width="24" height="1.4" fill="#5b9bd5" opacity="0.8"/>
<path d="M441.3,474 L441.3,468.6 L464,468.3 L467.4,470.5 L467.4,474" fill="none" stroke="#e6e6e6" stroke-width="1"/>
<line x1="444" y1="471.5" x2="466" y2="471.5" stroke="#9a9a9a" stroke-width="1"/>
<line x1="482.2" y1="461" x2="482.2" y2="474" stroke="#e8e8e8" stroke-width="1"/>
<line x1="491.8" y1="451.5" x2="491.8" y2="474" stroke="#e8e8e8" stroke-width="1"/>
<line x1="528.6" y1="464" x2="528.6" y2="474" stroke="#e8e8e8" stroke-width="1"/>
<line x1="555" y1="456" x2="555" y2="474" stroke="#e8e8e8" stroke-width="1"/>
<rect x="490.6" y="459" width="2.4" height="2" fill="#e8e8e8"/>
<rect x="481" y="468" width="2.4" height="1.6" fill="#e8e8e8"/>
<path d="M516,474 Q518,471.5 520,474" fill="none" stroke="#cfcfcf" stroke-width="0.7"/>
<rect x="374" y="473.3" width="22" height="1.8" fill="#e4e4e4"/>
<path d="M381.6,473 L385.5,448.2 L391,448.2 L392.2,473 M386.5,449 L383.5,472 M390,449 L391.2,472" fill="none" stroke="#e4e4e4" stroke-width="0.7"/>
<rect x="381" y="460.5" width="13.4" height="13" fill="none" stroke="#e4e4e4" stroke-width="0.7"/>
<path d="M381,463 L394,463 M383,463 L386,473 M389,463 L386,473 M391,463 L393,473 M381,470.5 L394,470.5" fill="none" stroke="#cfcfcf" stroke-width="0.5"/>
<rect x="394.6" y="458" width="13.2" height="16" fill="#1f4570"/>
<line x1="395" y1="459.5" x2="407.5" y2="459.5" stroke="#c8d2dc" stroke-width="0.9"/>
<line x1="395" y1="462.3" x2="407.5" y2="462.3" stroke="#8fa6bf" stroke-width="0.9"/>
<line x1="395" y1="465.1" x2="407.5" y2="465.1" stroke="#c8d2dc" stroke-width="0.9"/>
<line x1="395" y1="467.9" x2="407.5" y2="467.9" stroke="#8fa6bf" stroke-width="0.9"/>
<line x1="395" y1="470.7" x2="407.5" y2="470.7" stroke="#c8d2dc" stroke-width="0.9"/>
<rect x="394.6" y="458" width="13.2" height="16" fill="none" stroke="#e4e4e4" stroke-width="0.8"/>
<path d="M395.8,458 L395.8,431 L398.8,431 L398.8,458 M395.8,440 L398.8,440 M395.8,447 L398.8,447 M398.8,436 L401,437" fill="none" stroke="#eeeeee" stroke-width="0.8"/>
<path d="M401.3,458 L401.3,436.5 L404,436.5 L404,458" fill="none" stroke="#dddddd" stroke-width="0.7"/>
<line x1="408" y1="448" x2="408" y2="474" stroke="#d8d8d8" stroke-width="0.7"/>
<line x1="405.6" y1="454" x2="405.6" y2="458" stroke="#d8d8d8" stroke-width="0.6"/>
<rect x="401" y="468" width="10" height="9" fill="none" stroke="#e4e4e4" stroke-width="0.7"/>
<path d="M403,470 L409,470 M403,473 L409,473" stroke="#cfcfcf" stroke-width="0.5"/>
<rect x="411" y="467" width="9.4" height="10" fill="#2a5f98"/>
<line x1="411.3" y1="468.6" x2="420" y2="468.6" stroke="#d6e2ee" stroke-width="0.9"/>
<line x1="411.3" y1="471.2" x2="420" y2="471.2" stroke="#9fbcd8" stroke-width="0.9"/>
<line x1="411.3" y1="473.8" x2="420" y2="473.8" stroke="#d6e2ee" stroke-width="0.9"/>
<rect x="411" y="467" width="9.4" height="10" fill="none" stroke="#e4e4e4" stroke-width="0.7"/>
<path d="M411.6,467 L411.6,446 L414.8,446 L414.8,467 M411.6,453 L414.8,453 M411.6,460 L414.8,460" fill="none" stroke="#eeeeee" stroke-width="0.8"/>
<line x1="417.6" y1="449" x2="417.6" y2="467" stroke="#dadada" stroke-width="0.7"/>
<line x1="421.2" y1="458" x2="421.2" y2="476" stroke="#d0d0d0" stroke-width="0.7"/>
<path d="M375,486 L375,492 L380,492 M379,486 L384,492 M378,488 L382,488" fill="none" stroke="#cfcfcf" stroke-width="0.8"/>
<path d="M397,485 L397,491 L401,491 M400,485 L404,491" fill="none" stroke="#cfcfcf" stroke-width="0.8"/>
<rect x="377" y="485.5" width="3" height="2" fill="#5b9bd5"/>
<g transform="translate(679.6,376.3) scale(1.17,0.98)"><path d="M3.2,13.6 C2,12.5 0.6,11 0.3,9.8 C0.2,9.2 0.9,8.9 1.6,9.4 L3.6,10.8 L2.3,3.2 C2.2,2.5 3.2,2.3 3.5,3 L4.9,7.6 L5.1,1.6 C5.1,0.9 6.1,0.9 6.2,1.6 L6.6,7.2 L7.6,2.2 C7.8,1.5 8.7,1.7 8.6,2.4 L8.2,7.8 L10.3,4.6 C10.7,4.1 11.5,4.5 11.2,5.2 L9.2,10.5 C8.8,12.3 8.3,13.3 7.6,14 Z" fill="#f2f2f2" stroke="#111" stroke-width="0.3"/></g>
<circle cx="1073" cy="128.2" r="33.6" fill="none" stroke="#474d56" stroke-width="9.6"/>
</svg>
<div class="a" style="left:1030.5px;top:120.5px;font-size:13.5px;font-weight:bold;color:#c4c6c9">W</div>
<svg class="a" style="left:0;top:0" width="1050" height="645" viewBox="0 0 1050 645">
<path d="M-1,3.5 L7,3.5 L8.2,4.7 L8.2,13.6 L-1,13.6 Z" fill="#bdbdbd"/>
<rect x="1" y="4.2" width="4.6" height="2.6" fill="#f4f4f4"/>
<rect x="1.8" y="10.8" width="3.6" height="2.4" fill="#f4f4f4"/>
<path d="M12.8,3.5 L20.5,3.5 L21.6,4.6 L21.6,12.8 L12.8,12.8 Z" fill="#b5b5b5"/>
<rect x="15" y="4.2" width="4.4" height="2.4" fill="#f0f0f0"/>
<rect x="15.8" y="10.2" width="2.6" height="2.2" fill="#f0f0f0"/>
<path d="M18.5,13.8 L19,11.8 L22.2,8.6 L23.4,9.8 L20.2,13 Z" fill="#e8c04a"/>
<path d="M22.2,8.6 L23,7.8 L24.2,9 L23.4,9.8 Z" fill="#e0404a"/>
<rect x="28.2" y="3.6" width="5.8" height="9.4" fill="#4a4f56" stroke="#9c9c9c" stroke-width="0.9"/>
<path d="M32,9.5 L34.2,9.5 L34.8,10.2 L37,10.2 L37,12.8 L32,12.8 Z" fill="#e8c05a"/>
<rect x="45.2" y="3.6" width="6" height="9.4" fill="#4a4f56" stroke="#9c9c9c" stroke-width="0.9"/>
<path d="M43.5,7.3 L46.5,7.3 L46.5,5.8 L49.2,7.3 L46.5,8.8 L46.5,7.3" fill="#5cb0ee" stroke="#5cb0ee" stroke-width="1.2"/>
<rect x="60" y="3.7" width="6" height="2.8" rx="0.5" fill="#f2f2f2"/>
<rect x="57.2" y="5.8" width="10.8" height="5.8" rx="1" fill="#ececec"/>
<rect x="60" y="10.2" width="5.8" height="3.4" fill="#8fd0fa" stroke="#f0f0f0" stroke-width="0.6"/>
<path d="M72.6,8.2 L76.5,5.2 L76.5,7.2 C80,7.2 82.5,8.5 83.2,11 C81.5,9.6 79.5,9.2 76.5,9.3 L76.5,11.2 Z" fill="#e2e2e2"/>
<path d="M104.6,8.2 L100.7,5.2 L100.7,7.2 C97.2,7.2 94.7,8.5 94,11 C95.7,9.6 97.7,9.2 100.7,9.3 L100.7,11.2 Z" fill="#7c8088"/>
<path d="M87.0,7.3 L90.19999999999999,7.3 L88.6,9 Z" fill="#c8c8c8"/>
<path d="M109.4,7.3 L112.6,7.3 L111,9 Z" fill="#c8c8c8"/>
<polygon points="127.30,9.45 127.03,10.35 125.55,10.48 125.10,11.02 125.25,12.50 124.42,12.94 123.28,11.99 122.59,12.05 121.65,13.20 120.75,12.93 120.62,11.45 120.08,11.00 118.60,11.15 118.16,10.32 119.11,9.18 119.05,8.49 117.90,7.55 118.17,6.65 119.65,6.52 120.10,5.98 119.95,4.50 120.78,4.06 121.92,5.01 122.61,4.95 123.55,3.80 124.45,4.07 124.58,5.55 125.12,6.00 126.60,5.85 127.04,6.68 126.09,7.82 126.15,8.51" fill="#e6e6e6"/>
<circle cx="122.6" cy="8.5" r="1.54" fill="#343c49"/>
<path d="M218.8,7.6 L223.2,7.6 L221,10 Z" fill="#d8d8d8"/>
<rect x="229" y="5.8" width="5" height="1" fill="#d8d8d8"/>
<path d="M229,7.6 L234,7.6 L231.5,10.6 Z" fill="#d8d8d8"/>
<path d="M239,9 L248.6,4 L246.5,13 L243.5,10.8 L241.5,13 L242,10 Z" fill="#5cb3ef"/>
<path d="M710.2,7.2 L712.8,8.7 L710.2,10.2 Z" fill="#e0e0e0"/>
<circle cx="834" cy="7.5" r="3.4" fill="#4a505a" stroke="#d0d0d0" stroke-width="1.1"/>
<line x1="836.5" y1="10" x2="839" y2="13" stroke="#b88a4a" stroke-width="1.3"/>
<circle cx="849.7" cy="6.2" r="2.4" fill="#e6e6e6"/>
<path d="M844.5,13.6 C844.8,10.6 846.8,9.2 849.7,9.2 C852.6,9.2 854.6,10.6 854.8,13.6 Z" fill="#e6e6e6"/>
<path d="M910.8,8 L914,8 L912.4,9.6 Z" fill="#c8c8c8"/>
<path d="M921,5.2 L922.6,5.2 L923.8,10.8 L928.4,10.8 L929.4,6.6 L923,6.6" fill="none" stroke="#a9adb2" stroke-width="1.1"/>
<rect x="923.3" y="6.8" width="5.6" height="3.4" fill="#a9adb2"/>
<circle cx="924.2" cy="12.6" r="0.9" fill="#a9adb2"/><circle cx="928" cy="12.6" r="0.9" fill="#a9adb2"/>
<path d="M939.5,5 L943.6,12 L935.4,12 Z" fill="none" stroke="#e0e0e0" stroke-width="1.2"/>
<circle cx="939.5" cy="5" r="1" fill="#e0e0e0"/><circle cx="943.6" cy="12" r="1" fill="#e0e0e0"/><circle cx="935.4" cy="12" r="1" fill="#e0e0e0"/>
<path d="M948.6,8 L951.8,8 L950.2,9.6 Z" fill="#c8c8c8"/>
<line x1="958" y1="3" x2="958" y2="14" stroke="#3a414c" stroke-width="1"/>
<circle cx="968.8" cy="8.8" r="5" fill="#dcdcdc"/>
<text x="968.8" y="11.8" font-family="Liberation Sans" font-size="8" font-weight="bold" fill="#3a3f46" text-anchor="middle">?</text>
<path d="M978.6,8 L981.8,8 L980.2,9.6 Z" fill="#c8c8c8"/>
<path d="M991,4 C994,4 996,6 996,9 L996,13.6 L991,13.6 C988,13.6 986,11.5 986,8.8 C986,6 988,4 991,4 Z" fill="#dcdcdc"/>
<path d="M988.5,10 L990,8 L993.5,7.5 L992,9 Z" fill="#8a8e94"/>
<rect x="1046.5" y="8.3" width="4" height="0.9" fill="#b8b8b8"/>
<rect x="305" y="24.2" width="9.7" height="4.6" fill="#f4f4f4"/>
<path d="M308.8,28 L310,25.8 L311.2,28 Z" fill="#888"/>
<path d="M316.8,26.2 L320,26.2 L318.4,27.8 Z" fill="#d0d0d0"/>
<line x1="119.7" y1="37.1" x2="121.80000000000001" y2="39.2" stroke="#d0d3d8" stroke-width="0.9"/>
<path d="M123.0,36.9 L123.0,40.1 L119.80000000000001,40.1 Z" fill="#d0d3d8"/>
<line x1="251.5" y1="37.1" x2="253.6" y2="39.2" stroke="#d0d3d8" stroke-width="0.9"/>
<path d="M254.79999999999998,36.9 L254.79999999999998,40.1 L251.6,40.1 Z" fill="#d0d3d8"/>
<path d="M52.3,51 L57.7,56.4 M57.7,51 L52.3,56.4" stroke="#b8bcc2" stroke-width="1"/>
<path d="M71,53.6 L80,53.6 M75.5,49.2 L75.5,57.9" stroke="#dcdcdc" stroke-width="1.2"/>
<line x1="86.5" y1="58" x2="89.5" y2="50" stroke="#4a515c" stroke-width="0.8"/>
<rect x="175.5" y="607.5" width="2.2" height="1.2" fill="#9aa0a8"/>
<rect x="175.5" y="609.5" width="2.2" height="1.2" fill="#9aa0a8"/>
<rect x="175.5" y="611.5" width="2.2" height="1.2" fill="#9aa0a8"/>
<rect x="175.5" y="613.5" width="2.2" height="1.2" fill="#9aa0a8"/>
<rect x="175.5" y="615.5" width="2.2" height="1.2" fill="#9aa0a8"/>
<rect x="175.5" y="617.5" width="2.2" height="1.2" fill="#9aa0a8"/>
<path d="M182.5,609.5 L187,614 M187,609.5 L182.5,614" stroke="#e0e0e0" stroke-width="1.2"/>
<path d="M196.2,616.5 L201.2,611.5" stroke="#d8d8d8" stroke-width="1.5"/>
<path d="M200.2,612 C199.4,610.4 200.6,608.4 202.6,608.6 L201.6,609.8 L202.4,610.8 L203.6,609.8 C203.8,611.8 201.8,613 200.2,612 Z" fill="#d8d8d8"/>
<g transform="translate(211,607.5) scale(0.85)"><path d="M3.2,13.6 C2,12.5 0.6,11 0.3,9.8 C0.2,9.2 0.9,8.9 1.6,9.4 L3.6,10.8 L2.3,3.2 C2.2,2.5 3.2,2.3 3.5,3 L4.9,7.6 L5.1,1.6 C5.1,0.9 6.1,0.9 6.2,1.6 L6.6,7.2 L7.6,2.2 C7.8,1.5 8.7,1.7 8.6,2.4 L8.2,7.8 L10.3,4.6 C10.7,4.1 11.5,4.5 11.2,5.2 L9.2,10.5 C8.8,12.3 8.3,13.3 7.6,14 Z" fill="#d6d6d6"/></g>
<path d="M222.6,611.8 L226,611.8 L224.3,613.6 Z" fill="#555"/>
<path d="M874.5,614.2 L876.5,611.8 L878.5,614.2 Z" fill="#666"/>
<line x1="40.5" y1="636" x2="43.5" y2="628" stroke="#4a515c" stroke-width="0.8"/>
<line x1="87.5" y1="636" x2="90.5" y2="628" stroke="#4a515c" stroke-width="0.8"/>
<line x1="137.5" y1="636" x2="140.5" y2="628" stroke="#4a515c" stroke-width="0.8"/>
<line x1="163.5" y1="636" x2="166.5" y2="628" stroke="#4a515c" stroke-width="0.8"/>
<path d="M148,631.5 L157,631.5 M152.5,627 L152.5,636" stroke="#e6e6e6" stroke-width="1.2"/>
</svg>
<svg class="a" style="left:0;top:0" width="1050" height="645" viewBox="0 0 1050 645">
<line x1="677.6" y1="627" x2="677.6" y2="636" stroke="#c9ccd1" stroke-width="0.9"/>
<line x1="680.4" y1="627" x2="680.4" y2="636" stroke="#c9ccd1" stroke-width="0.9"/>
<line x1="683.2" y1="627" x2="683.2" y2="636" stroke="#c9ccd1" stroke-width="0.9"/>
<line x1="675.7" y1="628.8" x2="685" y2="628.8" stroke="#c9ccd1" stroke-width="0.9"/>
<line x1="675.7" y1="631.6" x2="685" y2="631.6" stroke="#c9ccd1" stroke-width="0.9"/>
<line x1="675.7" y1="634.4" x2="685" y2="634.4" stroke="#c9ccd1" stroke-width="0.9"/>
<rect x="691.3" y="627.9" width="1.5" height="1.3" fill="#c9ccd1"/>
<rect x="691.3" y="630.9" width="1.5" height="1.3" fill="#c9ccd1"/>
<rect x="691.3" y="633.9" width="1.5" height="1.3" fill="#c9ccd1"/>
<rect x="694.4" y="627.9" width="1.5" height="1.3" fill="#c9ccd1"/>
<rect x="694.4" y="630.9" width="1.5" height="1.3" fill="#c9ccd1"/>
<rect x="694.4" y="633.9" width="1.5" height="1.3" fill="#c9ccd1"/>
<rect x="697.5" y="627.9" width="1.5" height="1.3" fill="#c9ccd1"/>
<rect x="697.5" y="630.9" width="1.5" height="1.3" fill="#c9ccd1"/>
<rect x="697.5" y="633.9" width="1.5" height="1.3" fill="#c9ccd1"/>
<path d="M705.5,630.3 L710.0999999999999,630.3 L707.8,632.5999999999999 Z" fill="#d6d9de"/>
<path d="M762.2,630.3 L766.8,630.3 L764.5,632.5999999999999 Z" fill="#d6d9de"/>
<path d="M787.2,630.3 L791.8,630.3 L789.5,632.5999999999999 Z" fill="#d6d9de"/>
<path d="M827.2,630.3 L831.8,630.3 L829.5,632.5999999999999 Z" fill="#d6d9de"/>
<path d="M925.7,630.3 L930.3,630.3 L928,632.5999999999999 Z" fill="#d6d9de"/>
<path d="M951.7,630.3 L956.3,630.3 L954,632.5999999999999 Z" fill="#d6d9de"/>
<path d="M1028.2,630.3 L1032.8,630.3 L1030.5,632.5999999999999 Z" fill="#d6d9de"/>
<path d="M717.2,629.8 L720.8,629.8 M719,628 L719,631.6" stroke="#ffffff" stroke-width="0.9"/>
<rect x="720.6" y="632.6" width="6.4" height="2.6" fill="#ffffff"/>
<path d="M732.5,627 L732.5,636 L742,636" fill="none" stroke="#c9ccd1" stroke-width="0.9"/>
<rect x="732.5" y="632.6" width="3.2" height="3.2" fill="none" stroke="#c9ccd1" stroke-width="0.7"/>
<circle cx="751.2" cy="631.8" r="3.8" fill="none" stroke="#c9ccd1" stroke-width="0.9"/>
<path d="M751.2,631.8 L755.6,627.6 M751.5,631.8 L756.8,631.8" stroke="#c9ccd1" stroke-width="0.7"/>
<line x1="776.9" y1="627" x2="776.9" y2="636.6" stroke="#3fa45a" stroke-width="1.2"/>
<line x1="773" y1="627.2" x2="780.8" y2="635.2" stroke="#c8404a" stroke-width="0.9"/>
<circle cx="776.9" cy="631" r="0.9" fill="#bbb"/>
<path d="M804.7,627.8 L797.4,635.3 L807.2,635.3" fill="none" stroke="#c9ccd1" stroke-width="0.9"/>
<circle cx="801" cy="631.6" r="0.8" fill="#c9ccd1"/>
<rect x="813.6" y="628.2" width="8.6" height="8.6" fill="none" stroke="#c9ccd1" stroke-width="0.9"/>
<circle cx="813.8" cy="628.3" r="1.1" fill="#3a4250" stroke="#d89050" stroke-width="0.7"/>
<rect x="837.8" y="628" width="5" height="1.5" fill="#ffffff"/>
<rect x="843" y="628.2" width="4" height="0.7" fill="#cfdcec"/>
<rect x="837.8" y="630.9" width="5" height="1.5" fill="#ffffff"/>
<rect x="843" y="631.1" width="4" height="0.7" fill="#cfdcec"/>
<rect x="837.8" y="633.8" width="5" height="1.5" fill="#ffffff"/>
<rect x="843" y="634.0" width="4" height="0.7" fill="#cfdcec"/>
<rect x="855.6" y="630" width="6.6" height="6.4" fill="#ffffff"/>
<circle cx="854" cy="627.8" r="0.7" fill="#ffffff"/>
<path d="M873,627.5 L873.8,632 L877,636 L873,633.6 L869,636 L872.2,632 Z" fill="#ffffff"/>
<circle cx="877.8" cy="628.4" r="1.3" fill="none" stroke="#ffffff" stroke-width="0.6"/>
<path d="M889,627.5 L889.8,632 L893,636 L889,633.6 L885,636 L888.2,632 Z" fill="#cfd2d6"/>
<path d="M892.5,627 L892.5,630" stroke="#cfd2d6" stroke-width="0.7"/>
<path d="M904.2,627.5 L905.0,632 L908.2,636 L904.2,633.6 L900.2,636 L903.4000000000001,632 Z" fill="#cfd2d6"/>
<polygon points="945.51,632.91 945.24,633.78 943.90,633.96 943.47,634.48 943.54,635.83 942.74,636.26 941.67,635.44 940.99,635.50 940.09,636.51 939.22,636.24 939.04,634.90 938.52,634.47 937.17,634.54 936.74,633.74 937.56,632.67 937.50,631.99 936.49,631.09 936.76,630.22 938.10,630.04 938.53,629.52 938.46,628.17 939.26,627.74 940.33,628.56 941.01,628.50 941.91,627.49 942.78,627.76 942.96,629.10 943.48,629.53 944.83,629.46 945.26,630.26 944.44,631.33 944.50,632.01" fill="#e0e2e5"/><circle cx="941" cy="632" r="1.5" fill="#3a4250"/>
<path d="M962.6,632 L971.2,632 M966.9,627.6 L966.9,636.4" stroke="#e6e8ea" stroke-width="1.1"/>
<rect x="980.6" y="627.4" width="5.2" height="9.2" fill="#d8dadd"/>
<rect x="984" y="629" width="1.8" height="0.7" fill="#3a4250"/>
<rect x="984" y="631" width="1.8" height="0.7" fill="#3a4250"/>
<rect x="984" y="633" width="1.8" height="0.7" fill="#3a4250"/>
<rect x="984" y="635" width="1.8" height="0.7" fill="#3a4250"/>
<rect x="1038.8" y="626.8" width="3.6" height="3.6" fill="none" stroke="#c9ccd1" stroke-width="0.7"/>
<circle cx="1046.5" cy="631" r="2.4" fill="none" stroke="#c9ccd1" stroke-width="0.7"/>
<path d="M1040.6,632.5 L1043,636.6 L1038.2,636.6 Z" fill="none" stroke="#c9ccd1" stroke-width="0.7"/>
</svg>
</body></html>
